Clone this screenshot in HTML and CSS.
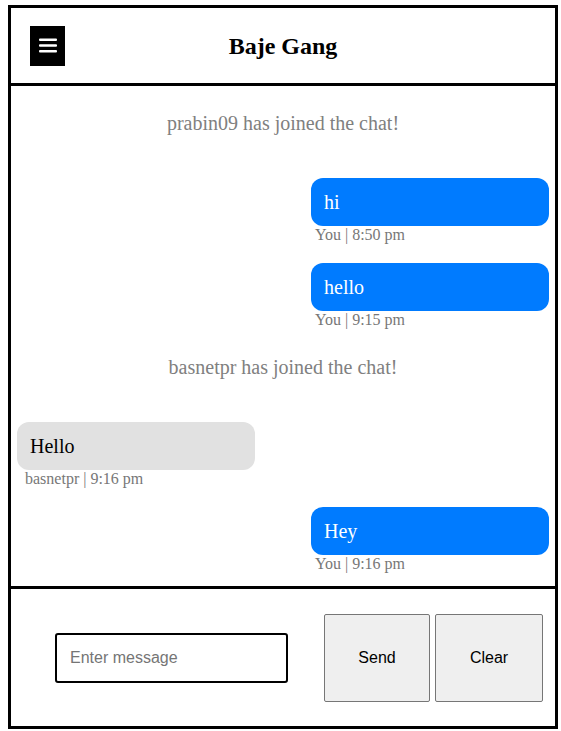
FILE: index.html
```html
<!DOCTYPE html>
<html>
<head>
<meta charset="utf-8">
<title>Baje Gang</title>
<link rel="stylesheet" href="styles.css">
</head>
<body>
<div class="app">
  <header class="header">
    <button class="menu-btn" aria-label="Menu">
      <svg width="18" height="15" viewBox="0 0 18 15">
        <rect x="0" y="0.5" width="18" height="2.6" rx="1" fill="#fff"/>
        <rect x="0" y="6.2" width="18" height="2.6" rx="1" fill="#fff"/>
        <rect x="0" y="11.9" width="18" height="2.6" rx="1" fill="#fff"/>
      </svg>
    </button>
    <h1 class="title">Baje Gang</h1>
    <div class="spacer"></div>
  </header>
  <main class="chat">
    <div class="system">prabin09 has joined the chat!</div>
    <div class="msg mine">
      <div class="bubble">hi</div>
      <div class="meta">You | 8:50 pm</div>
    </div>
    <div class="msg mine">
      <div class="bubble">hello</div>
      <div class="meta">You | 9:15 pm</div>
    </div>
    <div class="system">basnetpr has joined the chat!</div>
    <div class="msg theirs">
      <div class="bubble">Hello</div>
      <div class="meta">basnetpr | 9:16 pm</div>
    </div>
    <div class="msg mine">
      <div class="bubble">Hey</div>
      <div class="meta">You | 9:16 pm</div>
    </div>
  </main>
  <footer class="footer">
    <input class="input" type="text" placeholder="Enter message">
    <div class="buttons">
      <button class="btn btn-send">Send</button>
      <button class="btn btn-clear">Clear</button>
    </div>
  </footer>
</div>
</body>
</html>
```
FILE: styles.css
```css
html, body {
  margin: 0;
  padding: 0;
  background: #fff;
}
body {
  padding: 5px 0 0 8px;
  font-family: "Liberation Serif", "Times New Roman", serif;
}
.app {
  width: 550px;
  height: 724px;
  box-sizing: border-box;
  border: 3px solid #000;
  display: flex;
  flex-direction: column;
}
.header {
  height: 75px;
  border-bottom: 3px solid #000;
  display: grid;
  grid-template-columns: 1fr auto 1fr;
  align-items: center;
  padding: 0 19px;
  flex-shrink: 0;
}
.menu-btn {
  width: 35px;
  height: 40px;
  background: #000;
  border: none;
  padding: 0;
  margin: 1px 0 0 0;
  display: flex;
  align-items: center;
  justify-content: center;
  justify-self: start;
}
.menu-btn svg {
  display: block;
  margin-top: -1px;
}
.title {
  margin: 0;
  font-size: 24px;
  font-weight: bold;
  color: #000;
  line-height: 28px;
}
.chat {
  height: 503px;
  box-sizing: border-box;
  border-bottom: 3px solid #000;
  padding: 18px 6px 0 6px;
  display: flex;
  flex-direction: column;
  overflow: hidden;
  flex-shrink: 0;
}
.system {
  text-align: center;
  font-size: 20px;
  line-height: 23px;
  color: #808080;
  margin: 8px 0 43px 0;
}
.msg {
  width: 238px;
  margin-bottom: 19px;
  display: flex;
  flex-direction: column;
}
.msg.mine {
  align-self: flex-end;
}
.msg.theirs {
  align-self: flex-start;
}
.bubble {
  height: 48px;
  box-sizing: border-box;
  padding: 12px 13px;
  font-size: 20px;
  line-height: 24px;
  border-radius: 12px;
}
.mine .bubble {
  background: #007bff;
  color: #fff;
}
.theirs .bubble {
  background: #e1e1e1;
  color: #000;
}
.meta {
  font-size: 16px;
  line-height: 18px;
  color: #777;
}
.mine .meta {
  padding-left: 4px;
}
.theirs .meta {
  padding-left: 8px;
}
.footer {
  flex: 1;
  display: flex;
  align-items: center;
  padding: 0 12px 0 44px;
}
.input {
  width: 233px;
  height: 50px;
  box-sizing: border-box;
  border: 2px solid #000;
  border-radius: 3px;
  padding: 0 13px;
  font-family: "Liberation Sans", Arial, sans-serif;
  font-size: 16px;
  color: #000;
  outline: none;
}
.input::placeholder {
  color: #757575;
}
.buttons {
  margin-left: auto;
  display: flex;
  gap: 5px;
}
.btn {
  height: 88px;
  box-sizing: border-box;
  background: #efefef;
  border: 1px solid #767676;
  border-radius: 2px;
  font-family: "Liberation Sans", Arial, sans-serif;
  font-size: 16px;
  color: #000;
  padding: 0;
}
.btn-send {
  width: 106px;
}
.btn-clear {
  width: 108px;
}
```
